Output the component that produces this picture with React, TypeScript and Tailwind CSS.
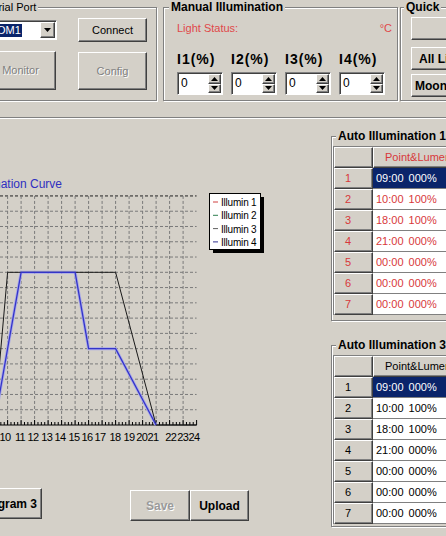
import React from 'react';

const raised =
  'bg-[#d4d0c8] border border-t-white border-l-white border-r-[#404040] border-b-[#404040] shadow-[inset_-1px_-1px_0_#808080]';
const sunken =
  'bg-white border border-t-[#808080] border-l-[#808080] border-r-white border-b-white shadow-[inset_1px_1px_0_#404040]';
const group = 'border border-[#808080] shadow-[1px_1px_0_#ffffff,inset_1px_1px_0_#ffffff]';

const Tri: React.FC<{ down?: boolean }> = ({ down }) => (
  <svg width="7" height="4" viewBox="0 0 7 4">
    <path d={down ? 'M0 0H7L3.5 4z' : 'M3.5 0L7 4H0z'} fill="#000" />
  </svg>
);

const Spin: React.FC = () => (
  <div className={`flex w-[46px] h-[23px] ${sunken}`}>
    <span className="flex-1 pl-[3px] text-[12px] leading-[20px] text-black">0</span>
    <div className="flex flex-col w-[13px] my-[1px] mr-[1px]">
      <div className={`flex-1 flex items-center justify-center ${raised}`}>
        <Tri />
      </div>
      <div className={`flex-1 flex items-center justify-center ${raised}`}>
        <Tri down />
      </div>
    </div>
  </div>
);

type Row = { n: number; t: string; p: string };
const rows: Row[] = [
  { n: 1, t: '09:00', p: '000%' },
  { n: 2, t: '10:00', p: '100%' },
  { n: 3, t: '18:00', p: '100%' },
  { n: 4, t: '21:00', p: '000%' },
  { n: 5, t: '00:00', p: '000%' },
  { n: 6, t: '00:00', p: '000%' },
  { n: 7, t: '00:00', p: '000%' },
];

const AutoTable: React.FC<{ red?: boolean }> = ({ red }) => {
  const txt = red ? 'text-[#d8383a]' : 'text-black';
  return (
    <div className="ml-[1px] mt-[3px] w-[140px] border-l border-t border-[#808080] text-[11px]">
      <div className="flex h-[21px]">
        <div className={`w-[39px] ${raised}`} />
        <div className={`flex-1 flex items-center pl-[11px] ${raised} ${txt}`}>Point&amp;Lumen</div>
      </div>
      {rows.map((r) => {
        const sel = r.n === 1;
        return (
          <div key={r.n} className="flex h-[21px]">
            <div className={`w-[39px] flex items-center pl-[10px] ${raised} ${txt}`}>{r.n}</div>
            <div
              className={`flex-1 flex items-center pl-[3px] border-b border-r border-[#808080] ${
                sel ? 'bg-[#0a246a] text-white' : `bg-white ${txt}`
              }`}
            >
              <span>{r.t}</span>
              <span className="ml-[5px]">{r.p}</span>
            </div>
          </div>
        );
      })}
    </div>
  );
};

const X = (h: number) => 7.6 + (h - 10) * 13.5;
const Y = (p: number) => 425 - p * 1.527;
const pts = (a: [number, number][]) => a.map(([h, p]) => `${X(h)},${Y(p)}`).join(' ');

const labels: [number, number][] = [
  [10, 5], [11, 20], [12, 33], [13, 46.7], [14, 60], [15, 74], [16, 87], [17, 100],
  [18, 115], [19, 129], [20, 141.7], [21, 153], [22, 170.7], [23, 182.7], [24, 194],
];

const Chart: React.FC = () => {
  const hLines = Array.from({ length: 15 }, (_, k) => k + 1);
  const vLines = Array.from({ length: 15 }, (_, i) => i + 9);
  const ticks = Array.from({ length: 61 }, (_, i) => X(9) + i * 3.375);
  const black = pts([[8, 0], [9, 0], [10, 100], [18, 100], [21, 0], [24, 0]]);
  const blue = pts([[8, 0], [9, 0], [11, 100], [15, 100], [16, 50], [18, 50], [21, 0]]);
  const legend = [
    ['#d04040', 'Illumin 1'],
    ['#2f7f4f', 'Illumin 2'],
    ['#606060', 'Illumin 3'],
    ['#303090', 'Illumin 4'],
  ];
  return (
    <svg className="block mt-[51px]" width="270" height="280" viewBox="0 170 270 280">
      <text x="62" y="188" textAnchor="end" fontSize="12" fill="#2f2fc0" fontFamily="Liberation Sans, Arial, sans-serif">
        Illumination Curve
      </text>
      {hLines.map((k) => (
        <line
          key={k}
          x1="-10"
          x2={X(24)}
          y1={Y(k * 10)}
          y2={Y(k * 10)}
          stroke={k === 15 ? '#202020' : '#7a7a7a'}
          strokeDasharray="3 2"
        />
      ))}
      {vLines.map((h) => (
        <line
          key={h}
          x1={X(h)}
          x2={X(h)}
          y1={Y(150)}
          y2={425}
          stroke={h === 24 ? '#202020' : '#7a7a7a'}
          strokeDasharray="3 2"
        />
      ))}
      <line x1="-10" x2={X(24)} y1="425" y2="425" stroke="#000" />
      {ticks.map((x, i) => (
        <line key={i} x1={x} x2={x} y1="425" y2={i % 4 === 0 ? 420 : 422} stroke="#000" />
      ))}
      <polyline points={blue} fill="none" stroke="#a8a8e8" strokeWidth="3" />
      <polyline points={black} fill="none" stroke="#1a1a1a" strokeWidth="1" />
      <polyline points={blue} fill="none" stroke="#3434c8" strokeWidth="1.3" />
      {labels.map(([h, x]) => (
        <text
          key={h}
          x={x}
          y="441"
          textAnchor="middle"
          fontSize="11"
          letterSpacing="-0.6"
          fill="#000"
          fontFamily="Liberation Sans, Arial, sans-serif"
        >
          {h}
        </text>
      ))}
      <rect x="213" y="197" width="51" height="56" fill="#000" />
      <rect x="209.5" y="193.5" width="51" height="56" fill="#fff" stroke="#000" />
      {legend.map(([c, t], i) => (
        <g key={t}>
          <line x1="213" x2="218" y1={202 + i * 13.3} y2={202 + i * 13.3} stroke={c} />
          <text
            x="221"
            y={206 + i * 13.3}
            fontSize="10"
            letterSpacing="-0.2"
            fill="#000"
            fontFamily="Liberation Sans, Arial, sans-serif"
          >
            {t}
          </text>
        </g>
      ))}
    </svg>
  );
};

export default function App() {
  return (
    <div className="w-[446px] h-[536px] overflow-hidden bg-[#d4d0c8] font-['Liberation_Sans',Arial,sans-serif] text-[11px] text-black select-none">
      {/* top groups */}
      <div className="flex items-start h-[101px]">
        <fieldset className={`ml-[-24px] w-[181px] h-[101px] shrink-0 ${group}`}>
          <legend className="ml-[6px] px-[2px] bg-[#d4d0c8] leading-[14px]">Serial Port</legend>
          <div className="flex pl-[8px]">
            <div className="flex flex-col w-[72px] shrink-0">
              <div className={`mt-[6px] h-[20px] flex items-center ${sunken}`}>
                <span className="ml-[2px] px-[1px] bg-[#0a246a] text-white leading-[13px]">COM1</span>
                <div className="flex-1" />
                <div className={`w-[15px] h-[16px] mr-[1px] flex items-center justify-center ${raised}`}>
                  <Tri down />
                </div>
              </div>
              <div className={`mt-[11px] w-[71px] h-[39px] flex items-center justify-center text-[#808080] [text-shadow:1px_1px_0_#fff] ${raised}`}>
                Monitor
              </div>
            </div>
            <div className="flex flex-col ml-[21px] w-[69px] shrink-0">
              <div className={`mt-[4px] h-[24px] flex items-center justify-center ${raised}`}>Connect</div>
              <div className={`mt-[10px] h-[38px] flex items-center justify-center text-[#808080] [text-shadow:1px_1px_0_#fff] ${raised}`}>
                Config
              </div>
            </div>
          </div>
        </fieldset>

        <fieldset className={`ml-[6px] w-[235px] h-[101px] shrink-0 ${group}`}>
          <legend className="ml-[5px] px-[2px] bg-[#d4d0c8] leading-[14px] text-[12px] font-bold">Manual Illumination</legend>
          <div className="flex justify-between mt-[6px] pl-[13px] pr-[5px] h-[14px] text-[#e0484a]">
            <span>Light Status:</span>
            <span>°C</span>
          </div>
          <div className="flex gap-[8px] pl-[13px] mt-[17px]">
            {['I1(%)', 'I2(%)', 'I3(%)', 'I4(%)'].map((l) => (
              <div key={l} className="flex flex-col w-[46px]">
                <span className="text-[14px] font-bold tracking-[1px] leading-[16px] whitespace-nowrap">{l}</span>
                <div className="mt-[5px]">
                  <Spin />
                </div>
              </div>
            ))}
          </div>
        </fieldset>

        <fieldset className={`ml-[2px] w-[90px] h-[101px] shrink-0 ${group}`}>
          <legend className="ml-[3px] px-[2px] bg-[#d4d0c8] leading-[14px] text-[12px] font-bold">Quick</legend>
          <div className="flex flex-col pl-[10px] text-[12px] font-bold">
            <div className={`mt-[3px] h-[23px] w-[80px] ${raised}`} />
            <div className={`mt-[7px] h-[23px] w-[80px] flex items-center pl-[7px] whitespace-nowrap ${raised}`}>All Lights On</div>
            <div className={`mt-[4px] h-[23px] w-[80px] flex items-center pl-[3px] whitespace-nowrap ${raised}`}>Moonlight</div>
          </div>
        </fieldset>
      </div>

      {/* separator */}
      <div className="mt-[16px] h-[2px] border-t border-b border-t-[#808080] border-b-white" />

      {/* main */}
      <div className="flex">
        <div className="flex flex-col w-[331px] shrink-0">
          <Chart />
          <div className="flex mt-[38px] text-[12px] font-bold">
            <div className={`ml-[-45px] w-[87px] h-[31px] shrink-0 flex items-center justify-end pr-[4px] ${raised}`}>Program 3</div>
            <div className={`ml-[88px] mt-[2px] w-[60px] h-[31px] shrink-0 flex items-center justify-center text-[#9a9a9a] [text-shadow:1px_1px_0_#fff] ${raised}`}>
              Save
            </div>
            <div className={`mt-[2px] w-[59px] h-[31px] shrink-0 flex items-center justify-center ${raised}`}>Upload</div>
          </div>
        </div>
        <div className="flex flex-col shrink-0">
          <fieldset className={`mt-[10px] w-[130px] h-[192px] ${group}`}>
            <legend className="ml-[4px] px-[2px] bg-[#d4d0c8] leading-[14px] text-[12px] font-bold">Auto Illumination 1</legend>
            <AutoTable red />
          </fieldset>
          <fieldset className={`mt-[17px] w-[130px] h-[189px] ${group}`}>
            <legend className="ml-[4px] px-[2px] bg-[#d4d0c8] leading-[14px] text-[12px] font-bold">Auto Illumination 3</legend>
            <AutoTable />
          </fieldset>
        </div>
      </div>
    </div>
  );
}
